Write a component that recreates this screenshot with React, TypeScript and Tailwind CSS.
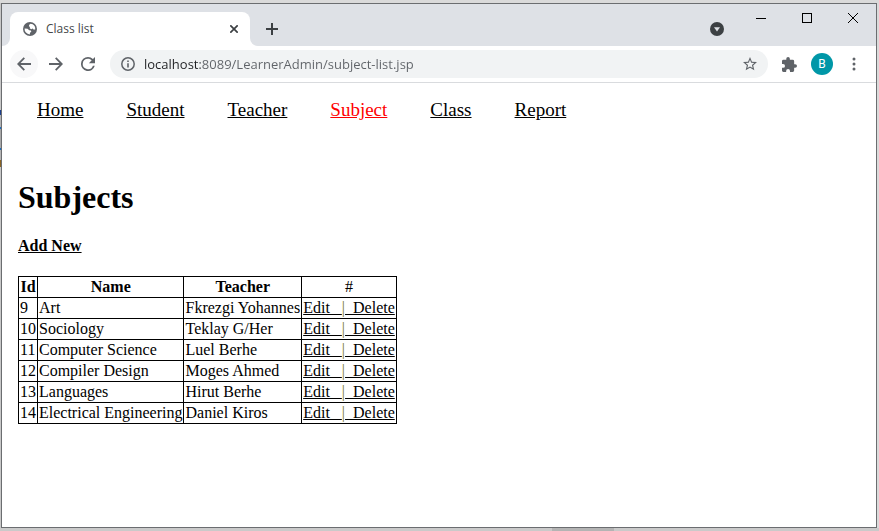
const subjects = [
  { id: 9, name: "Art", teacher: "Fkrezgi Yohannes" },
  { id: 10, name: "Sociology", teacher: "Teklay G/Her" },
  { id: 11, name: "Computer Science", teacher: "Luel Berhe" },
  { id: 12, name: "Compiler Design", teacher: "Moges Ahmed" },
  { id: 13, name: "Languages", teacher: "Hirut Berhe" },
  { id: 14, name: "Electrical Engineering", teacher: "Daniel Kiros" },
];

const navItems = ["Home", "Student", "Teacher", "Subject", "Class", "Report"];

function GlobeIcon() {
  return (
    <svg viewBox="0 0 14 14" className="size-[14px] shrink-0" aria-hidden="true">
      <circle cx="7" cy="7" r="7" fill="#5f6368" />
      <path
        fill="#fff"
        d="M7.600 1.700 6.200 2.800 5.900 4.200 7 5 6.700 6.300 8.200 7.300 9.600 6.600 10.900 7.700 12.300 7.200A5.400 5.400 0 0 0 7.600 1.700Z"
      />
      <path
        fill="#fff"
        d="M1.600 6.500 4.600 6.700 6.200 8.200 7.900 8.500 8.300 9.800 7 10.800 6.800 12.400A5.400 5.400 0 0 1 1.600 6.500Z"
      />
    </svg>
  );
}

function TabStrip() {
  return (
    <div className="flex h-[42px] shrink-0 items-end bg-[#dee1e6]">
      <div className="size-2 bg-white">
        <div className="size-2 rounded-br-lg bg-[#dee1e6]" />
      </div>
      <div className="flex h-[34px] w-60 items-center rounded-t-lg bg-white pr-2 pl-[13px]">
        <GlobeIcon />
        <span className="ml-[9px] flex-1 font-['Open_Sans',sans-serif] text-[12px] leading-4 text-[#45474a]">
          Class list
        </span>
        <button type="button" aria-label="Close tab" className="grid size-4 place-items-center">
          <svg viewBox="0 0 8 8" className="size-2" fill="none" stroke="#3c4043" strokeWidth="1.7">
            <path d="M.3.3l7.4 7.4M7.7.3.3 7.7" />
          </svg>
        </button>
      </div>
      <div className="size-2 bg-white">
        <div className="size-2 rounded-bl-lg bg-[#dee1e6]" />
      </div>
      <button type="button" aria-label="New tab" className="mb-[3px] grid size-7 place-items-center">
        <svg viewBox="0 0 12 12" className="size-3" stroke="#3c4043" strokeWidth="2">
          <path d="M6 0v12M0 6h12" />
        </svg>
      </button>
      <div className="flex-1" />
      <button type="button" aria-label="Search tabs" className="mr-[14px] mb-[10px]">
        <svg viewBox="0 0 14 14" className="block size-[14px]">
          <circle cx="7" cy="7" r="7" fill="#3c4043" />
          <path d="M4 5.3h6L7 9.4z" fill="#dee1e6" />
        </svg>
      </button>
      <div className="flex self-start">
        <button type="button" aria-label="Minimize" className="grid h-7 w-[46px] place-items-center">
          <svg viewBox="0 0 10 10" className="size-[10px]" shapeRendering="crispEdges">
            <path d="M0 5h10v1H0z" fill="#000" />
          </svg>
        </button>
        <button type="button" aria-label="Maximize" className="grid h-7 w-[46px] place-items-center">
          <svg viewBox="0 0 10 10" className="size-[10px]" shapeRendering="crispEdges">
            <path d="M.5.5h9v9h-9z" fill="none" stroke="#000" />
          </svg>
        </button>
        <button type="button" aria-label="Close" className="grid h-7 w-[46px] place-items-center">
          <svg viewBox="0 0 10 10" className="size-[10px]">
            <path d="M0 0l10 10M10 0 0 10" stroke="#000" />
          </svg>
        </button>
      </div>
    </div>
  );
}

function Toolbar() {
  return (
    <div className="flex h-[37px] shrink-0 items-center border-b border-[#d9dbde] bg-white pl-2 text-[#5f6368]">
      <div className="flex gap-1">
        <button type="button" aria-label="Back" className="grid size-7 place-items-center rounded-full bg-[#f8f8f9]">
          <svg viewBox="0 0 14 14" className="size-[14px]" fill="none" stroke="currentColor" strokeWidth="1.8">
            <path d="M14 7H1.3M7.3.8 1.2 7l6.1 6.2" />
          </svg>
        </button>
        <button type="button" aria-label="Forward" className="grid size-7 place-items-center">
          <svg viewBox="0 0 14 14" className="size-[14px]" fill="none" stroke="currentColor" strokeWidth="1.8">
            <path d="M0 7h12.7M6.7.8 12.8 7l-6.1 6.2" />
          </svg>
        </button>
        <button type="button" aria-label="Reload" className="grid size-7 place-items-center">
          <svg viewBox="4 4 16 16" className="size-[14px]" fill="currentColor">
            <path d="M17.65 6.35A7.96 7.96 0 0 0 12 4a8 8 0 1 0 7.73 10h-2.08A6 6 0 1 1 12 6c1.66 0 3.14.69 4.22 1.78L13 11h7V4z" />
          </svg>
        </button>
      </div>
      <div className="ml-2 flex h-7 min-w-0 flex-1 items-center rounded-full bg-[#f1f3f4] pr-[11px] pl-[11px]">
        <button type="button" aria-label="View site information" className="shrink-0">
          <svg viewBox="0 0 14 14" className="block size-[14px]" fill="none" stroke="currentColor" strokeWidth="1.5">
            <circle cx="7" cy="7" r="6.2" />
            <path d="M7 6.2v4.2M7 3.4v1.6" strokeWidth="1.6" />
          </svg>
        </button>
        <input
          type="text"
          aria-label="Address"
          defaultValue="localhost:8089/LearnerAdmin/subject-list.jsp"
          className="ml-[9px] h-7 min-w-0 flex-1 bg-[linear-gradient(90deg,#202124_56px,#5f6368_56px)] bg-clip-text font-['Open_Sans',sans-serif] text-[13px] text-transparent caret-black outline-none"
        />
        <button type="button" aria-label="Bookmark this page" className="shrink-0">
          <svg viewBox="2 2 20 20" className="block size-[14px]" fill="currentColor">
            <path d="m22 9.24-7.19-.62L12 2 9.19 8.63 2 9.24l5.46 4.73L5.82 21 12 17.27 18.18 21l-1.63-7.03zM12 15.4l-3.76 2.27 1-4.28-3.32-2.88 4.38-.38L12 6.1l1.71 4.04 4.38.38-3.32 2.88 1 4.28z" />
          </svg>
        </button>
      </div>
      <button type="button" aria-label="Extensions" className="ml-[14px]">
        <svg viewBox="2 1 21 21" className="block size-[15px]" fill="currentColor">
          <path d="M20.5 11H19V7a2 2 0 0 0-2-2h-4V3.500a2.500 2.500 0 0 0-5 0V5H4a2 2 0 0 0-2 2v3.800h1.500a2.700 2.700 0 0 1 0 5.400H2V20a2 2 0 0 0 2 2h3.800v-1.500a2.700 2.700 0 0 1 5.400 0V22H17a2 2 0 0 0 2-2v-4h1.500a2.500 2.500 0 0 0 0-5z" />
        </svg>
      </button>
      <button
        type="button"
        aria-label="Profile"
        className="ml-[14px] grid size-[22px] place-items-center rounded-full bg-[#0097a7] font-[Roboto,sans-serif] text-[12px] leading-none text-white"
      >
        B
      </button>
      <button type="button" aria-label="Menu" className="mr-[15px] ml-[14px]">
        <svg viewBox="0 0 14 14" className="block size-[14px]" fill="currentColor">
          <circle cx="7" cy="2" r="1.500" />
          <circle cx="7" cy="7" r="1.500" />
          <circle cx="7" cy="12" r="1.500" />
        </svg>
      </button>
    </div>
  );
}

function SubjectTable() {
  return (
    <table className="mt-[21px] border-collapse leading-[18px] [&_td]:border [&_td]:border-black [&_td]:p-px [&_th]:border [&_th]:border-black [&_th]:p-px">
      <thead>
        <tr>
          <th>Id</th>
          <th>Name</th>
          <th>Teacher</th>
          <th className="font-normal">#</th>
        </tr>
      </thead>
      <tbody>
        {subjects.map((s) => (
          <tr key={s.id}>
            <td>{s.id}</td>
            <td>{s.name}</td>
            <td>{s.teacher}</td>
            <td className="whitespace-nowrap">
              <a href="#edit" className="underline">Edit&nbsp;&nbsp;&nbsp;</a>
              <span className="text-[#77751f]">|</span>
              <a href="#delete" className="underline">&nbsp;&nbsp;Delete</a>
            </td>
          </tr>
        ))}
      </tbody>
    </table>
  );
}

export default function App() {
  return (
    <div className="flex h-screen flex-col bg-[#dadada] pt-[3px]">
      <div className="flex min-h-0 flex-1 pr-[2px]">
        <div className="w-px bg-[linear-gradient(#c8c8c8_107px,#1c3f8c_107px,#1c3f8c_112px,#b4b4b4_112px,#b4b4b4_124px,#1e6fc0_124px,#1e6fc0_126px,#a8a8a8_126px,#a8a8a8_145px,#1e6fc0_145px,#1e6fc0_147px,#b4b4b4_147px,#b4b4b4_157px,#8a6424_157px,#8a6424_164px,#c8c8c8_164px)]" />
        <div className="flex min-w-0 flex-1 flex-col border border-[#6b6d70] bg-white">
          <TabStrip />
          <Toolbar />
          <div className="flex-1 overflow-hidden px-4 font-['Liberation_Serif','Times_New_Roman',serif] text-[16px] text-black">
            <nav className="flex gap-[43px] pt-4 pl-[19px] text-[19px] leading-[22px]">
              {navItems.map((item) => (
                <a
                  key={item}
                  href={"#" + item.toLowerCase()}
                  className={item === "Subject" ? "text-[#ff0000] underline" : "underline"}
                >
                  {item}
                </a>
              ))}
            </nav>
            <h1 className="mt-[58px] text-[32px] leading-9 font-bold">Subjects</h1>
            <p className="mt-[22px] leading-[18px] font-bold">
              <a href="#add" className="underline">Add New</a>
            </p>
            <SubjectTable />
          </div>
        </div>
      </div>
      <div className="flex h-[3px] justify-end bg-[#cacaca] pr-[265px]">
        <div className="w-[62px] bg-[#b4b4b4]" />
      </div>
    </div>
  );
}
